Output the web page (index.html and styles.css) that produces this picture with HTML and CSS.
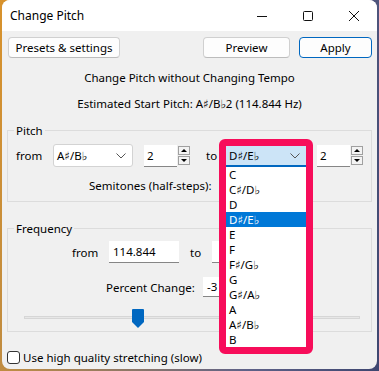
FILE: index.html
```html
<!DOCTYPE html>
<html lang="en">
<head>
    <meta charset="UTF-8">
    <title>Change Pitch</title>
    <link rel="stylesheet" href="styles.css">
</head>
<body>
    <div class="window">
        <div class="titlebar">
            <span class="title">Change Pitch</span>
            <div class="caption">
                <span class="caption-btn">
                    <svg width="12" height="12" viewBox="0 0 12 12"><path d="M1 6.5h10" stroke="#111" stroke-width="1"/></svg>
                </span>
                <span class="caption-btn">
                    <svg width="12" height="12" viewBox="0 0 12 12"><rect x="1.5" y="1.5" width="9" height="9" rx="1" fill="none" stroke="#111" stroke-width="1"/></svg>
                </span>
                <span class="caption-btn">
                    <svg width="12" height="12" viewBox="0 0 12 12"><path d="M1 1l10 10M11 1L1 11" stroke="#111" stroke-width="1"/></svg>
                </span>
            </div>
        </div>

        <div class="content">
            <div class="toolbar">
                <button class="btn presets">Presets &amp; settings</button>
                <div class="spacer"></div>
                <button class="btn preview">Preview</button>
                <button class="btn apply">Apply</button>
            </div>

            <p class="heading">Change Pitch without Changing Tempo</p>
            <p class="estimate">Estimated Start Pitch: A♯/B♭2 (114.844 Hz)</p>

            <fieldset class="group pitch">
                <legend>Pitch</legend>
                <div class="row pitch-row">
                    <span class="lbl from">from</span>
                    <div class="combo">
                        <span>A♯/B♭</span>
                        <svg class="chevron" width="10" height="6" viewBox="0 0 10 6"><path d="M0.5 0.5L5 5L9.5 0.5" fill="none" stroke="#555" stroke-width="1"/></svg>
                    </div>
                    <div class="spin">
                        <span class="spin-value">2</span>
                        <div class="spin-btns">
                            <span class="arrow up"></span>
                            <span class="arrow down"></span>
                        </div>
                    </div>
                    <span class="lbl to">to</span>
                    <div class="combo open">
                        <span>D♯/E♭</span>
                        <svg class="chevron" width="10" height="6" viewBox="0 0 10 6"><path d="M0.5 0.5L5 5L9.5 0.5" fill="none" stroke="#555" stroke-width="1"/></svg>
                        <ul class="dropdown">
                            <li>C</li>
                            <li>C♯/D♭</li>
                            <li>D</li>
                            <li class="selected">D♯/E♭</li>
                            <li>E</li>
                            <li>F</li>
                            <li>F♯/G♭</li>
                            <li>G</li>
                            <li>G♯/A♭</li>
                            <li>A</li>
                            <li>A♯/B♭</li>
                            <li>B</li>
                        </ul>
                        <div class="ring"></div>
                    </div>
                    <div class="spin spin-right">
                        <span class="spin-value">2</span>
                        <div class="spin-btns">
                            <span class="arrow up"></span>
                            <span class="arrow down"></span>
                        </div>
                    </div>
                </div>
                <div class="semitones">Semitones (half-steps):</div>
            </fieldset>

            <fieldset class="group freq">
                <legend>Frequency</legend>
                <div class="row freq-row">
                    <span class="lbl">from</span>
                    <div class="textbox freq-from">114.844</div>
                    <span class="lbl">to</span>
                    <div class="textbox freq-to"></div>
                </div>
                <div class="row percent-row">
                    <span class="lbl">Percent Change:</span>
                    <div class="textbox percent">-3</div>
                </div>
                <div class="slider">
                    <div class="track"></div>
                    <svg class="thumb" width="12" height="19" viewBox="0 0 12 19"><path d="M1 0h10a1 1 0 0 1 1 1v12l-6 6l-6-6v-12a1 1 0 0 1 1-1z" fill="#0067c0"/></svg>
                </div>
            </fieldset>

            <label class="check">
                <span class="box"></span>
                <span>Use high quality stretching (slow)</span>
            </label>
        </div>
    </div>
</body>
</html>
```

FILE: styles.css
```css
body {
    margin: 0;
    width: 379px;
    height: 371px;
    overflow: hidden;
    background: linear-gradient(100deg, #d8922c 0, #b88a48 20%, #5e6288 70%, #3e4670 100%);
    font-family: "Noto Sans", "DejaVu Sans", sans-serif;
    font-size: 11.5px;
    color: #000;
}

.window {
    margin-left: 2px;
    width: 375px;
    height: 369px;
    background-color: #f0f0f0;
    border-radius: 8px;
    overflow: hidden;
    display: flex;
    flex-direction: column;
}

.titlebar {
    height: 31px;
    flex: none;
    background-color: #fff;
    display: flex;
    align-items: center;
}

.title {
    padding-left: 8px;
    flex: 1;
    font-size: 12px;
}

.caption {
    display: flex;
    height: 100%;
}

.caption-btn {
    width: 46px;
    display: flex;
    align-items: center;
    justify-content: center;
}

.content {
    flex: 1;
    position: relative;
}

.toolbar {
    display: flex;
    padding: 6px 5px 0 6px;
}

.spacer {
    flex: 1;
}

.btn {
    height: 21px;
    background-color: #fdfdfd;
    border: 1px solid #d0d0d0;
    border-bottom-color: #bcbcbc;
    border-radius: 4px;
    font-family: inherit;
    font-size: 11.5px;
    padding: 0;
    color: #000;
}

.presets {
    width: 112px;
}

.preview {
    width: 87px;
}

.apply {
    width: 73px;
    margin-left: 9px;
    border-color: #0067c0;
}

.heading,
.estimate {
    margin: 0;
    text-align: center;
    line-height: 16px;
}

.heading {
    margin-top: 12px;
}

.estimate {
    margin-top: 10px;
}

.group {
    margin: 0 5px;
    border: 1px solid #dcdcdc;
    padding: 0;
}

.group legend {
    margin-left: 6px;
    padding: 0 2px;
    line-height: 15px;
}

.pitch {
    margin-top: 11px;
    height: 77px;
}

.row {
    display: flex;
    align-items: center;
}

.lbl {
    white-space: nowrap;
}

.pitch-row {
    padding-top: 6px;
    height: 23px;
}

.pitch-row .from {
    margin-left: 8px;
    width: 37px;
}

.combo {
    position: relative;
    box-sizing: border-box;
    width: 80px;
    height: 23px;
    background-color: #fff;
    border: 1px solid #d3d3d3;
    border-radius: 3px;
    display: flex;
    align-items: center;
    padding-left: 3px;
}

.combo span {
    flex: 1;
}

.chevron {
    margin-right: 6px;
}

.spin {
    display: flex;
    margin-left: 11px;
    height: 22px;
    align-items: stretch;
}

.spin-value {
    box-sizing: border-box;
    width: 33px;
    background-color: #fff;
    border-bottom: 1px solid #868686;
    padding-left: 3px;
    line-height: 22px;
}

.spin-btns {
    display: flex;
    flex-direction: column;
    justify-content: center;
    gap: 1px;
    width: 12px;
    margin-left: 1px;
}

.arrow {
    position: relative;
    height: 9px;
    box-sizing: border-box;
    border: 1px solid #a0a0a0;
    background-color: #f3f3f3;
}

.arrow::after {
    content: "";
    position: absolute;
    left: 2px;
    top: 2px;
    border-left: 3px solid transparent;
    border-right: 3px solid transparent;
}

.arrow.up::after {
    border-bottom: 3px solid #000;
}

.arrow.down::after {
    border-top: 3px solid #000;
}

.pitch-row .to {
    margin-left: 16px;
    width: 20px;
}

.combo.open {
    height: 21px;
    margin-top: 2px;
    border: none;
    border-radius: 0;
    border-bottom: 2px solid #0067c0;
    background-color: #cce4f7;
}

.dropdown {
    position: absolute;
    left: 0;
    top: 21px;
    width: 80px;
    margin: 0;
    padding: 0;
    list-style: none;
    background-color: #fff;
    z-index: 2;
}

.dropdown li {
    height: 15px;
    line-height: 15px;
    padding-left: 3px;
}

.dropdown li.selected {
    background-color: #0078d7;
    color: #fff;
}

.ring {
    position: absolute;
    left: -7px;
    top: -7px;
    width: 80px;
    height: 201px;
    border: 7px solid #f70d5a;
    border-radius: 6px;
    z-index: 3;
}

.spin-right {
    margin-left: 11px;
}

.semitones {
    margin: 11px 0 0 81px;
    line-height: 16px;
}

.freq {
    margin-top: 19px;
    height: 109px;
}

.freq-row {
    padding-top: 5px;
    height: 22px;
}

.freq-row .lbl:first-child {
    margin-left: 64px;
    width: 37px;
}

.textbox {
    box-sizing: border-box;
    height: 22px;
    background-color: #fff;
    border-bottom: 1px solid #868686;
    padding-left: 4px;
    line-height: 21px;
}

.freq-from {
    width: 70px;
}

.freq-row .lbl:nth-child(3) {
    margin-left: 11px;
    width: 22px;
}

.freq-to {
    width: 70px;
}

.percent-row {
    margin-top: 14px;
    height: 20px;
}

.percent-row .lbl {
    margin-left: 98px;
    width: 97px;
}

.percent {
    height: 20px;
    width: 70px;
    line-height: 19px;
}

.slider {
    position: relative;
    height: 19px;
    margin: 12px 11px 0 16px;
}

.track {
    position: absolute;
    left: 0;
    right: 0;
    top: 7px;
    height: 3px;
    box-sizing: border-box;
    background-color: #e7e7e7;
    border: 1px solid #d6d6d6;
}

.thumb {
    position: absolute;
    left: 108px;
    top: 0;
}

.check {
    display: flex;
    align-items: center;
    margin: 18px 0 0 5px;
    height: 14px;
}

.box {
    box-sizing: border-box;
    width: 13px;
    height: 13px;
    border: 1px solid #333;
    border-radius: 3px;
    background-color: #fff;
    margin-right: 3px;
}
```
